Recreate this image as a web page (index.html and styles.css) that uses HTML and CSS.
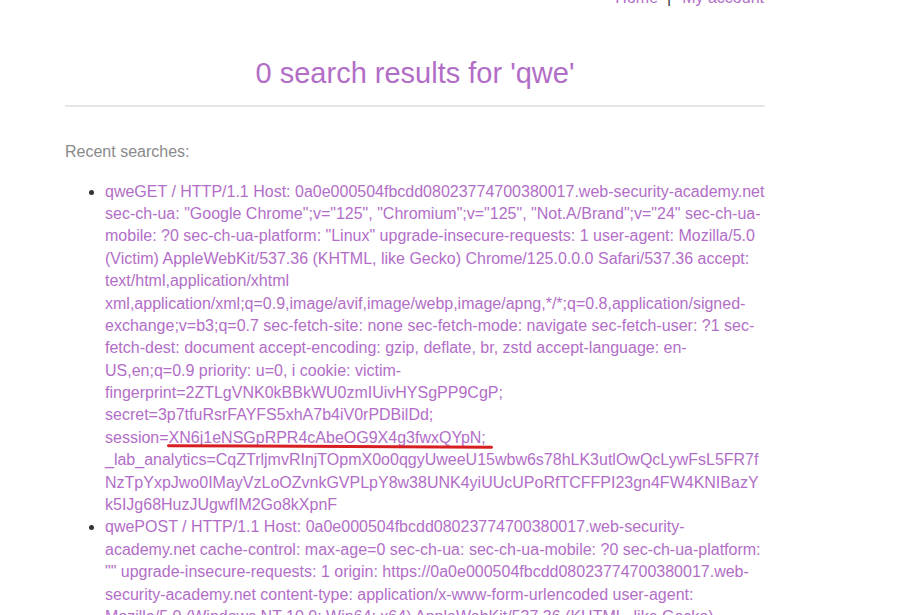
FILE: index.html
```html
<!DOCTYPE html>
<html>
<head>
<meta charset="utf-8">
<link rel="stylesheet" href="styles.css">
</head>
<body>
<div class="container">
  <header class="top-links">
    <a href="#">Home</a><span class="sep">|</span><a href="#">My account</a>
  </header>
  <h1 class="title">0 search results for 'qwe'</h1>
  <hr class="divider">
  <p class="recent">Recent searches:</p>
  <ul class="searches">
    <li><a href="#">qweGET / HTTP/1.1 Host: 0a0e000504fbcdd08023774700380017.web-security-academy.net sec-ch-ua: "Google Chrome";v="125", "Chromium";v="125", "Not.A/Brand";v="24" sec-ch-ua-mobile: ?0 sec-ch-ua-platform: "Linux" upgrade-insecure-requests: 1 user-agent: Mozilla/5.0 (Victim) AppleWebKit/537.36 (KHTML, like Gecko) Chrome/125.0.0.0 Safari/537.36 accept: text/html,application/xhtml xml,application/xml;q=0.9,image/avif,image/webp,image/apng,*/*;q=0.8,application/signed-exchange;v=b3;q=0.7 sec-fetch-site: none sec-fetch-mode: navigate sec-fetch-user: ?1 sec-fetch-dest: document accept-encoding: gzip, deflate, br, zstd accept-language: en-US,en;q=0.9 priority: u=0, i cookie: victim-fingerprint=2ZTLgVNK0kBBkWU0zmIUivHYSgPP9CgP; secret=3p7tfuRsrFAYFS5xhA7b4iV0rPDBilDd; session=<span class="marked">XN6j1eNSGpRPR4cAbeOG9X4g3fwxQYpN;</span> _lab_analytics=CqZTrljmvRInjTOpmX0o0qgyUweeU15wbw6s78hLK3utlOwQcLywFsL5FR7fNzTpYxpJwo0IMayVzLoOZvnkGVPLpY8w38UNK4yiUUcUPoRfTCFFPI23gn4FW4KNIBazYk5IJg68HuzJUgwfIM2Go8kXpnF</a></li>
    <li><a href="#">qwePOST / HTTP/1.1 Host: 0a0e000504fbcdd08023774700380017.web-security-academy.net cache-control: max-age=0 sec-ch-ua: sec-ch-ua-mobile: ?0 sec-ch-ua-platform: "" upgrade-insecure-requests: 1 origin: https://0a0e000504fbcdd08023774700380017.web-security-academy.net content-type: application/x-www-form-urlencoded user-agent: Mozilla/5.0 (Windows NT 10.0; Win64; x64) AppleWebKit/537.36 (KHTML, like Gecko) Chrome/125.0.0.0 Safari/537.36 accept: text/html</a></li>
  </ul>
</div>
</body>
</html>
```

FILE: styles.css
```css
html, body {
  margin: 0;
  padding: 0;
  background: #ffffff;
}
body {
  font-family: "Liberation Sans", Arial, sans-serif;
  font-size: 16px;
  line-height: 1.4;
  color: #333332;
}
.container {
  width: 700px;
  margin: 0 0 0 65px;
}
.top-links {
  margin-top: -13px;
  padding-right: 1px;
  text-align: right;
}
.top-links a {
  color: #b26ec7;
  text-decoration: none;
}
.top-links .sep {
  color: #333332;
  margin: 0 11px 0 9px;
}
.title {
  margin: 47px 0 0;
  font-size: 29px;
  line-height: 1.2;
  font-weight: normal;
  text-align: center;
  color: #b26ec7;
}
.divider {
  margin: 14px 0 0;
  border: 0;
  height: 2px;
  background: #e6e6e6;
}
.recent {
  margin: 34px 0 17px;
  color: #8a8a8a;
}
.searches {
  margin: 0;
  padding-left: 40px;
  overflow-wrap: break-word;
}
.searches a {
  color: #b26ec7;
  text-decoration: none;
}
.marked {
  position: relative;
}
.marked::after {
  content: "";
  position: absolute;
  left: -2px;
  right: -7px;
  bottom: -2px;
  height: 3px;
  border-radius: 2px;
  background: #d71f22;
  transform: rotate(0.3deg);
}
```
